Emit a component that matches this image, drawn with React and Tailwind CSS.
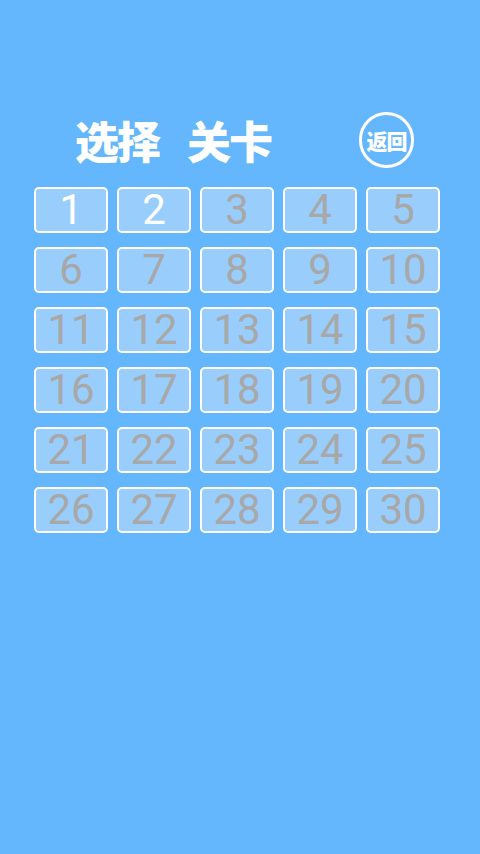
export default function App() {
  const levels = Array.from({ length: 30 }, (_, i) => i + 1);
  const unlocked = 2;

  return (
    <div className="min-h-[854px] w-[480px] bg-[#64b6fd] font-['Roboto','Noto_Sans_CJK_SC',sans-serif]">
      <div className="flex items-center pt-[112px] h-[168px]">
        <h1 className="ml-[75px] flex gap-[28px] text-[44px] leading-none font-black text-white tracking-[-2px] font-['Noto_Sans_CJK_SC',sans-serif]">
          <span>选择</span>
          <span>关卡</span>
        </h1>
        <button className="ml-auto mr-[66px] w-[55px] h-[56px] rounded-full border-[3px] border-white flex items-center justify-center text-white text-[21px] leading-none font-black tracking-[-1px] font-['Noto_Sans_CJK_SC',sans-serif]">
          返回
        </button>
      </div>
      <div className="grid grid-cols-[repeat(5,74px)] gap-x-[9px] gap-y-[14px] ml-[34px] mt-[19px]">
        {levels.map((n) => (
          <div
            key={n}
            className={`h-[46px] rounded-[5px] border-2 border-white bg-[#99cdfc] flex items-center justify-center text-[42px] leading-none ${
              n <= unlocked ? "text-white" : "text-[#a8a8a8]"
            }`}
          >
            {n}
          </div>
        ))}
      </div>
    </div>
  );
}
